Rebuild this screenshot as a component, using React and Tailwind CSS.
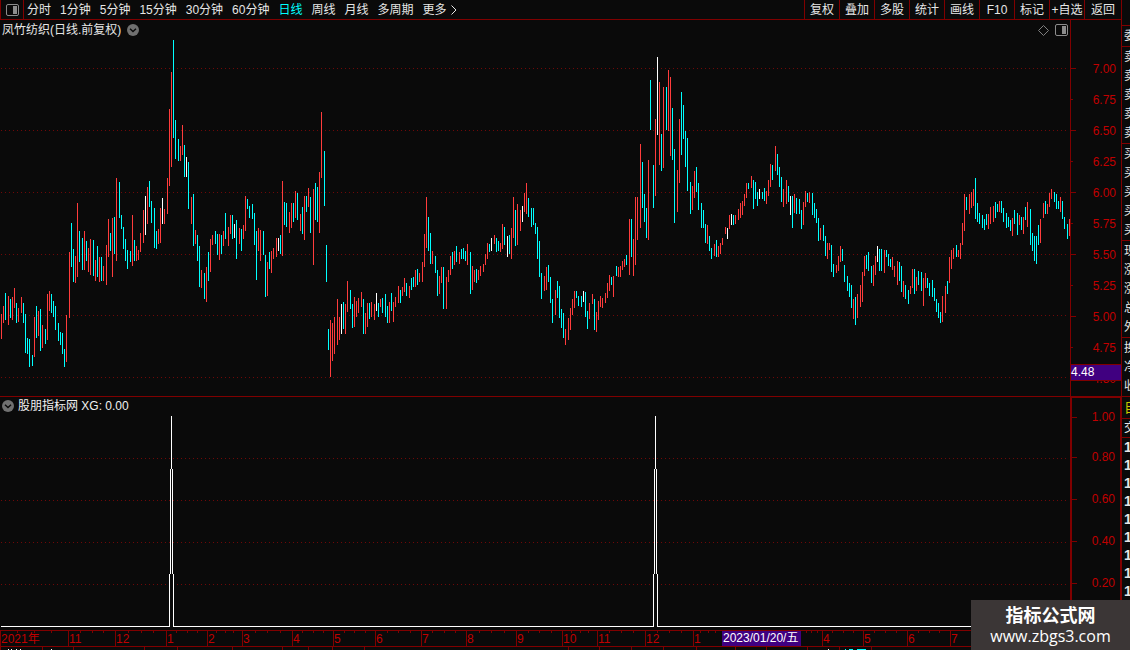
import clsx from 'clsx';

// x, top, bottom, tone (u = up, d = down, f = flat)
const BARS = `
1 314 339 u,3 306 323 u,5 293 320 d,8 296 325 u,10 299 318 d,12 297 320 u,14 288 308 u,16 303 323 d,18 308 322 u,21 297 313 u,
23 303 323 d,25 314 353 d,27 338 354 d,29 339 367 d,32 355 366 d,34 317 357 u,36 306 338 d,38 311 336 u,40 309 351 d,42 325 348 u,
45 329 344 d,47 294 340 u,49 291 311 u,51 294 313 d,53 301 317 d,55 306 330 d,58 323 341 d,60 332 345 d,62 333 354 d,64 349 367 d,
66 315 362 u,69 252 318 u,71 223 267 d,73 249 282 d,75 256 283 u,77 203 277 u,79 231 262 d,82 238 270 d,84 231 270 u,86 241 261 d,
88 248 272 u,90 239 275 u,93 240 276 d,95 260 281 u,97 246 277 d,99 257 282 u,101 257 281 d,103 266 281 u,106 245 285 u,108 219 257 u,
110 233 251 d,112 218 277 u,114 217 254 d,116 178 261 u,119 182 218 d,121 215 229 d,123 227 249 d,125 239 261 d,127 250 269 d,130 251 262 d,
132 215 266 u,134 240 261 d,136 246 261 u,138 250 260 u,140 233 252 u,143 210 243 u,145 196 235 f,147 187 224 u,149 181 207 d,151 201 223 d,
154 208 248 d,156 231 249 d,158 229 244 u,160 208 243 u,162 198 224 f,164 209 224 u,167 178 214 u,169 109 186 u,171 72 167 u,173 40 138 d,
175 120 159 d,178 139 161 d,180 146 161 u,182 125 155 u,184 145 177 d,186 157 177 f,188 162 209 d,191 197 224 u,193 194 246 d,195 230 244 u,
197 235 261 d,199 246 287 d,201 270 288 u,204 273 299 d,206 267 302 u,208 252 281 d,210 239 272 u,212 235 245 u,215 231 244 d,217 234 255 d,
219 234 260 u,221 235 254 d,223 231 246 u,225 213 239 d,228 227 246 u,230 215 234 u,232 215 239 d,234 224 238 f,236 220 259 d,239 228 244 u,
241 229 251 d,243 225 239 u,245 196 231 u,247 199 209 d,249 206 218 d,252 204 219 d,254 213 245 d,256 231 280 d,258 228 251 u,260 230 261 u,
263 231 255 d,265 255 297 d,267 262 296 u,269 252 269 d,271 251 273 u,273 248 259 u,276 238 257 u,278 238 251 f,280 235 254 d,282 181 256 u,
284 202 225 d,286 203 227 d,289 212 233 u,291 203 228 u,293 203 222 d,295 191 218 u,297 193 220 d,300 214 231 u,302 207 234 d,304 196 240 u,
306 196 212 d,308 188 207 u,310 197 233 d,313 189 265 u,315 183 220 d,317 187 222 d,319 172 233 u,321 112 178 u,324 151 206 d,326 245 282 d,
328 329 350 d,330 320 377 u,332 323 361 u,334 317 354 u,337 299 345 u,339 317 340 u,341 304 334 f,343 302 329 d,345 304 334 u,347 281 312 u,
350 290 309 d,352 304 328 d,354 297 327 u,356 301 317 u,358 298 313 u,361 292 307 u,363 299 334 d,365 313 334 u,367 303 327 u,369 303 319 d,
371 302 317 u,374 304 320 u,376 293 311 f,378 303 317 d,380 299 307 u,382 298 313 d,385 294 317 d,387 306 323 d,389 302 323 u,391 293 311 d,
393 302 322 u,395 297 307 u,398 286 303 u,400 290 303 d,402 287 296 u,404 278 292 u,406 283 296 d,409 286 298 u,411 278 290 d,413 277 287 d,
415 270 287 u,417 269 285 d,419 273 282 u,422 262 282 u,424 234 267 u,426 197 248 u,428 217 251 d,430 233 264 d,432 251 264 u,435 256 273 d,
437 270 296 d,439 276 294 u,441 267 283 u,443 267 309 d,446 277 309 u,448 270 282 u,450 256 275 u,452 252 269 d,454 251 265 u,456 246 262 d,
459 252 264 u,461 249 259 d,463 248 259 d,465 251 261 d,467 244 265 u,470 252 294 d,472 266 290 u,474 270 282 u,476 269 283 d,478 270 280 u,
480 266 276 u,483 264 272 u,485 254 265 u,487 243 259 u,489 244 252 d,491 238 251 f,494 235 244 u,496 238 252 d,498 241 251 d,500 243 252 u,
502 224 249 u,504 227 245 d,507 236 257 f,509 235 254 d,511 228 259 u,513 197 238 u,515 210 246 d,517 204 245 u,520 210 231 u,522 206 222 f,
524 193 212 u,526 183 214 u,528 198 217 d,531 208 227 d,533 208 225 d,535 223 234 d,537 227 259 d,539 241 277 d,541 273 299 d,544 276 291 u,
546 267 290 u,548 265 282 d,550 277 303 d,552 299 323 d,555 290 315 u,557 281 298 d,559 286 318 d,561 309 328 d,563 313 338 d,565 329 345 u,
568 318 340 u,570 308 330 u,572 299 315 u,574 291 308 u,576 291 298 d,578 296 306 d,581 296 307 d,583 291 302 f,585 292 317 d,587 311 329 d,
589 303 319 u,592 294 304 u,594 299 330 d,596 312 332 u,598 301 320 u,600 296 307 u,602 298 308 u,605 293 303 u,607 283 298 u,609 275 291 u,
611 277 285 d,613 276 297 u,616 266 276 d,618 267 277 u,620 266 277 u,622 261 270 u,624 259 267 u,626 255 265 d,629 219 275 u,631 219 257 d,
633 239 276 u,635 197 265 u,637 197 240 u,640 144 228 u,642 162 208 d,644 194 222 d,646 208 238 d,648 160 240 u,650 80 130 d,653 165 208 d,
655 119 196 u,657 57 135 f,659 82 165 u,661 134 171 d,663 87 168 u,666 87 130 d,668 70 131 u,670 77 156 u,672 108 160 d,674 149 223 d,
677 170 212 u,679 119 183 u,681 92 155 d,683 105 139 d,685 131 167 d,687 138 191 d,690 182 214 d,692 186 210 u,694 171 198 u,696 167 192 d,
698 183 210 d,701 203 228 d,703 210 228 d,705 224 243 d,707 225 244 u,709 236 251 d,711 248 259 d,714 244 256 u,716 240 257 d,718 246 257 u,
720 243 254 u,722 238 245 u,725 227 234 u,727 228 239 f,729 215 229 u,731 214 225 f,733 215 225 d,735 215 224 u,738 209 220 u,740 203 218 u,
742 201 215 u,744 194 206 u,746 183 198 u,748 183 189 d,751 176 188 u,753 180 209 d,755 182 199 d,757 192 206 d,759 189 199 f,762 192 199 d,
764 188 201 d,766 191 204 u,768 180 196 u,770 164 187 u,772 165 180 d,775 146 171 u,777 154 175 d,779 167 187 d,781 177 202 d,783 189 207 u,
786 180 204 u,788 186 202 d,790 196 215 f,792 196 228 d,794 194 213 u,796 198 214 d,799 199 214 d,801 210 229 d,803 202 225 u,805 191 207 u,
807 193 202 d,809 192 203 u,812 193 215 d,814 203 218 d,816 209 223 d,818 218 241 d,820 228 240 u,823 225 241 d,825 236 256 d,827 243 259 u,
829 243 250 u,831 245 272 d,833 264 277 d,836 265 273 u,838 256 271 u,840 246 262 u,842 249 261 d,844 265 282 d,847 276 291 d,849 283 297 d,
851 285 308 d,853 299 319 u,855 297 325 d,857 294 318 u,860 285 307 u,862 272 302 u,864 256 276 u,866 255 269 d,868 252 271 d,871 266 283 d,
873 265 286 u,875 256 275 u,877 246 262 f,879 249 271 d,881 249 271 d,884 250 273 u,886 250 257 d,888 254 266 d,890 259 267 d,892 257 270 u,
894 266 277 u,897 261 285 u,899 262 281 d,901 266 292 d,903 281 297 u,905 285 299 d,908 290 304 d,910 286 294 u,912 269 288 u,914 269 294 d,
916 277 291 u,918 271 285 d,921 272 291 d,923 278 306 u,925 273 288 u,927 278 288 d,929 283 296 d,932 280 297 d,934 288 301 d,936 299 312 d,
938 303 318 d,940 312 323 d,942 296 322 u,945 286 313 u,947 281 294 d,949 257 283 u,951 250 269 u,953 248 259 u,956 245 257 d,958 250 257 u,
960 243 259 u,962 223 245 u,964 194 231 u,966 197 210 d,969 194 214 u,971 192 208 u,973 189 206 u,975 178 219 d,977 203 222 d,979 213 224 d,
982 215 228 d,984 219 230 d,986 214 225 d,988 214 229 u,990 207 224 u,993 206 222 u,995 202 218 d,997 204 212 d,999 201 212 u,1001 201 213 d,
1003 208 222 d,1006 213 228 d,1008 217 227 d,1010 220 231 d,1012 218 236 u,1014 210 224 d,1017 213 235 d,1019 215 225 u,1021 217 230 d,
1023 217 234 u,1025 207 220 d,1027 202 227 u,1030 209 245 d,1032 233 251 d,1034 236 261 d,1036 236 264 d,1038 225 245 d,1040 219 243 u,
1043 203 218 u,1045 201 214 d,1047 204 214 u,1049 193 207 u,1051 189 199 u,1054 192 202 d,1056 194 209 d,1058 201 209 d,1060 197 212 u,
1062 201 219 d,1064 217 229 d,1067 224 239 d,1069 219 236 u
`.trim().split(',').map((row) => {
    const [x, top, bottom, tone] = row.trim().split(' ');
    return { x: +x, top: +top, height: bottom - top, tone };
});

const TONES = { u: 'fill-[#ff3c3c]', d: 'fill-[#00ffff]', f: 'fill-white' };

const PERIODS = ['分时', '1分钟', '5分钟', '15分钟', '30分钟', '60分钟', '日线', '周线', '月线', '多周期'];
const TOOLS = ['复权', '叠加', '多股', '统计', '画线', 'F10', '标记', '+自选', '返回'];
const PRICES = ['7.00', '6.75', '6.50', '6.25', '6.00', '5.75', '5.50', '5.25', '5.00', '4.75', '4.50'];
const LEVELS = ['1.00', '0.80', '0.60', '0.40', '0.20'];

// label, share of the axis width
const MONTHS = [
    ['2021年', 68], ['11', 47], ['12', 51], ['1', 41], ['2', 35], ['3', 50], ['4', 41], ['5', 42],
    ['6', 46], ['7', 45], ['8', 50], ['9', 46], ['10', 35], ['11', 48], ['12', 48], ['1', 29],
    ['2023/01/20/五', 79], ['', 21], ['4', 41], ['5', 44], ['6', 43], ['7', 171],
];
const MONTH_COLUMNS = MONTHS.map(([, share]) => `minmax(0, ${share}fr)`).join(' ');

const QUOTE_GROUPS = [['委'], ['卖', '卖', '卖', '卖', '卖'], ['买', '买', '买', '买', '买'], ['现', '涨', '涨', '总', '外'], ['换', '净', '收']];

const PanelIcon = ({ className }) => (
    <svg width="13" height="12" viewBox="0 0 13 12" className={className} aria-hidden="true">
        <rect x="0.5" y="0.5" width="12" height="11" rx="1.5" fill="none" stroke="#8c8c8c" />
        <rect x="7" y="2" width="4" height="8" fill="#8c8c8c" />
    </svg>
);

const ChevronBadge = () => (
    <svg width="12" height="12" viewBox="0 0 12 12" aria-hidden="true">
        <circle cx="6" cy="6" r="6" fill="#707070" />
        <path d="M3 4.8L6 7.6L9 4.8" fill="none" stroke="#0a0a0a" strokeWidth="1.4" />
    </svg>
);

const Toolbar = () => (
    <header className="flex h-5 shrink-0 border-b border-[#800000] text-[#e6e6e6]">
        <button aria-label="Toggle panel" className="flex w-6 items-center justify-center border-x border-[#800000]">
            <PanelIcon />
        </button>
        <nav className="flex items-center gap-[9px] pl-[3px]">
            {PERIODS.map((p) => (
                <button key={p} className={clsx('whitespace-nowrap', p === '日线' && 'text-[#00ffff]')}>{p}</button>
            ))}
            <button className="flex items-center gap-1 whitespace-nowrap">
                更多
                <svg width="6" height="10" viewBox="0 0 6 10" aria-hidden="true">
                    <path d="M0.5 0.5L5 5L0.5 9.5" fill="none" stroke="currentColor" />
                </svg>
            </button>
        </nav>
        <div className="ml-auto flex">
            {TOOLS.map((t) => (
                <button key={t} className="w-[35px] whitespace-nowrap border-l border-[#800000] text-center last:w-[37px]">{t}</button>
            ))}
        </div>
    </header>
);

const Grid = ({ rows }) => rows.map((y) => (
    <line key={y} x1="1" x2="1068" y1={y + 0.5} y2={y + 0.5} stroke="#700808" strokeDasharray="1 3" />
));

const AxisRow = ({ label, minor, className }) => (
    <div className={clsx('flex min-h-0 items-center justify-between pr-[5px] leading-3', className)}>
        <span className={clsx('h-px bg-[#800000]', minor ? 'w-0.5' : 'w-[5px]')} />
        <span>{label}</span>
    </div>
);

const PricePanel = () => (
    <section className="flex min-h-0 flex-[376_1_0px] border-b border-[#800000]">
        <div className="flex min-w-0 flex-1 flex-col">
            <div className="flex h-5 shrink-0 items-center gap-1.5 pl-0.5 text-[#e6e6e6]">
                <h1>凤竹纺织(日线.前复权)</h1>
                <button aria-label="Options"><ChevronBadge /></button>
                <svg width="11" height="11" viewBox="0 0 11 11" className="ml-auto" aria-hidden="true">
                    <path d="M5.5 0.5L10.5 5.5L5.5 10.5L0.5 5.5Z" fill="none" stroke="#808080" />
                </svg>
                <PanelIcon className="mr-0.5" />
            </div>
            <svg viewBox="0 40 1070 356" preserveAspectRatio="none" shapeRendering="crispEdges" className="min-h-0 w-full flex-1">
                <Grid rows={[68, 130, 192, 254, 315, 377]} />
                {BARS.map((b) => (
                    <rect key={b.x} x={b.x} y={b.top} width="1" height={b.height} className={TONES[b.tone]} />
                ))}
            </svg>
        </div>
        <div className="relative flex w-[51px] flex-col border-l border-[#800000] text-[#c00000]">
            <div className="flex-[33_1_0px]" />
            {PRICES.map((p, i) => <AxisRow key={p} label={p} minor={i % 2 === 1} className="flex-[31_1_0px]" />)}
            <div className="flex-[2_1_0px]" />
            <div className="absolute inset-x-0 bottom-[15px] border-y border-[#800000] bg-[#400080] leading-[15px] text-white">4.48</div>
        </div>
    </section>
);

// one spike of the XG signal, widening towards the base line
const Spike = ({ x }) => (
    <path
        d={`M${x} 416h1v53h-1zM${x - 1} 469h1v105h-1zM${x + 1} 469h1v105h-1zM${x - 2} 574h1v53h-1zM${x + 2} 574h1v53h-1z`}
        fill="#fff"
    />
);

const SignalPanel = () => (
    <section className="flex min-h-0 flex-[233_1_0px]">
        <div className="flex min-w-0 flex-1 flex-col">
            <div className="flex h-[17px] shrink-0 items-center gap-1 pl-0.5 text-[#f0f0f0]">
                <button aria-label="Options"><ChevronBadge /></button>
                <h2>股朋指标网 XG: 0.00</h2>
            </div>
            <svg viewBox="0 414 1070 216" preserveAspectRatio="none" shapeRendering="crispEdges" className="min-h-0 w-full flex-1">
                <Grid rows={[458, 500, 542, 584]} />
                <path d="M1 626h169v1h-169zM173 626h481v1h-481zM657 626h413v1h-413z" fill="#fff" />
                <Spike x={171} />
                <Spike x={655} />
            </svg>
        </div>
        <div className="flex w-[51px] flex-col border-l-2 border-r border-t border-[#800000] text-[#c00000]">
            {LEVELS.map((l, i) => (
                <AxisRow key={l} label={l} className={i === 0 ? 'flex-[38_1_0px]' : 'flex-[42_1_0px]'} />
            ))}
            <div className="flex-[26_1_0px]" />
        </div>
    </section>
);

const TimeAxis = () => (
    <div style={{ gridTemplateColumns: MONTH_COLUMNS }} className="grid h-[17px] shrink-0 border-y border-[#800000] text-[#c00000]">
        {MONTHS.map(([label], i) => {
            const picked = label.includes('/');
            return (
                <div
                    key={i}
                    className={clsx('flex flex-col', picked && 'bg-[#400080] text-white', label && !picked && 'border-l border-[#800000]')}
                >
                    {!picked && (
                        <div className="flex h-0.5 justify-evenly">
                            {[1, 2, 3].map((t) => <span key={t} className="w-px bg-[#800000]" />)}
                        </div>
                    )}
                    <span className={clsx('whitespace-nowrap', picked ? 'pl-px leading-[15px]' : 'leading-[13px]')}>{label}</span>
                </div>
            );
        })}
    </div>
);

// upper edge of the status bar
const StatusEdge = () => (
    <svg viewBox="0 0 1121 3" preserveAspectRatio="none" shapeRendering="crispEdges" className="h-[3px] w-full shrink-0" aria-hidden="true">
        {[0, 42, 73, 144, 177, 232, 282, 308, 332, 364, 568, 599, 631, 663, 696, 735, 766, 807, 839, 871].map((x) => (
            <rect key={x} x={x} y="0" width="1" height="3" fill="#800000" />
        ))}
        <path d="M8 2h1v1h-1zM11 2h1v1h-1zM16 2h1v1h-1zM20 2h1v1h-1zM51 2h1v1h-1zM828 2h1v1h-1z" fill="#fff" />
        <path d="M845 2h1v1h-1zM849 2h4v1h-4zM857 2h9v1h-9z" fill="#00ffff" />
    </svg>
);

const QuoteStrip = () => (
    <aside className="w-[9px] shrink-0 overflow-hidden border-l border-[#800000] text-[#e6e6e6]">
        <div className="h-[25px]" />
        {QUOTE_GROUPS.map((rows, i) => (
            <ul key={i} className="border-t border-[#800000] pl-0.5 pt-px">
                {rows.map((r, j) => <li key={j} className="w-3 leading-[19px]">{r}</li>)}
            </ul>
        ))}
        <div className="w-5 border-t border-[#800000] pl-0.5 text-sm leading-[21px] text-[#c8c800]">自</div>
        <div className="w-5 border-y border-[#800000] pl-0.5 leading-[18px]">交</div>
        <ul className="pl-0.5 text-sm font-bold">
            {Array.from({ length: 9 }, (_, i) => <li key={i} className="leading-[18px]">1</li>)}
        </ul>
    </aside>
);

const App = () => (
    <div className="relative flex h-screen overflow-hidden bg-[#0a0a0a] font-['Liberation_Sans','Noto_Sans_CJK_SC',sans-serif] text-xs">
        <main className="flex min-w-0 flex-1 flex-col">
            <Toolbar />
            <PricePanel />
            <SignalPanel />
            <TimeAxis />
            <StatusEdge />
        </main>
        <QuoteStrip />
        <a href="#site" className="absolute bottom-0 right-0 flex h-[50px] w-[159px] flex-col items-center bg-[#3b3636] pt-1 text-white">
            <span className="text-lg font-bold leading-6">指标公式网</span>
            <span className="font-['Open_Sans',sans-serif] text-base leading-4">www.zbgs3.com</span>
        </a>
    </div>
);

export default App;
